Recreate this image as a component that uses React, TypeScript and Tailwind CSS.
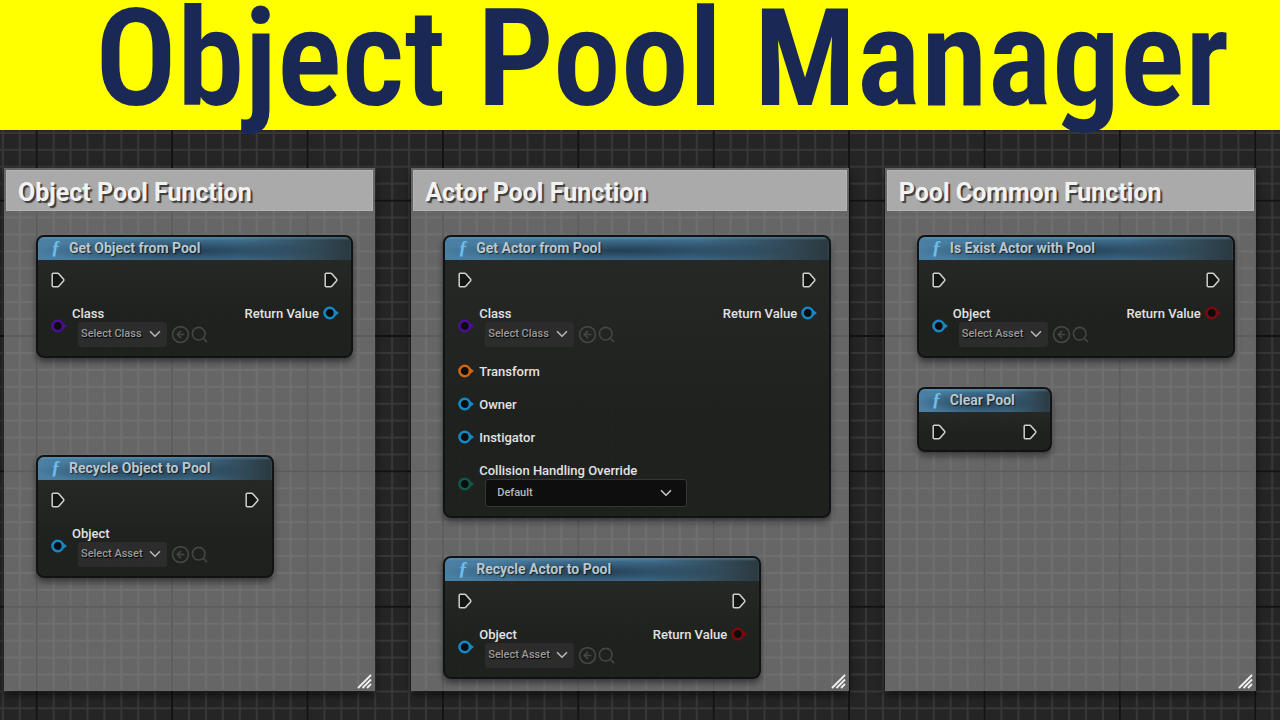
import type { ReactNode } from "react";
import { ChevronDown, CircleArrowLeft, Search } from "lucide-react";

const BLUE = "#1488c4";
const PURPLE = "#4a0f94";
const ORANGE = "#cf6510";
const TEAL = "#0d5a4c";
const RED = "#7c0a0c";

function ExecPin() {
  return (
    <svg width="15" height="16" viewBox="0 0 15 16" className="block">
      <path
        d="M1.2 2.2Q1.2 1.2 2.2 1.2H6.6Q7.4 1.2 8 1.9L12.6 7.3Q13.1 8 12.6 8.7L8 14.1Q7.4 14.8 6.6 14.8H2.2Q1.2 14.8 1.2 13.8Z"
        fill="#141614"
        stroke="#d0d0d0"
        strokeWidth="1.5"
      />
    </svg>
  );
}

function DataPin({ color }: { color: string }) {
  return (
    <svg width="16" height="14" viewBox="0 0 16 14" className="block shrink-0">
      <path d="M10 2.4L15.4 6.5Q16 7 15.4 7.5L10 11.6Z" fill={color} />
      <circle cx="6.7" cy="7" r="5.2" fill="#0b0d0d" stroke={color} strokeWidth="2.6" />
    </svg>
  );
}

function Grid() {
  return (
    <svg className="absolute inset-0 h-full w-full" aria-hidden="true">
      <defs>
        <pattern id="minor" x="36.7" y="70.6" width="16.925" height="16.925" patternUnits="userSpaceOnUse">
          <path d="M0 0V16.925M0 0H16.925M16.925 0V16.925M0 16.925H16.925" stroke="#373737" strokeWidth="2" />
        </pattern>
        <pattern id="major" x="-31" y="2.9" width="135.4" height="135.4" patternUnits="userSpaceOnUse">
          <path d="M67.7 0V135.4M0 67.7H135.4" stroke="#121212" strokeWidth="2" />
        </pattern>
      </defs>
      <rect width="100%" height="100%" fill="#252525" />
      <rect width="100%" height="100%" fill="url(#minor)" />
      <rect width="100%" height="100%" fill="url(#major)" />
    </svg>
  );
}

function AssetPicker({ id, text }: { id: string; text: string }) {
  return (
    <div className="-mt-px mb-px ml-1.5 flex h-[25px] items-start">
      <div className="relative">
        <select
          id={id}
          className="block h-[25px] w-[89px] appearance-none rounded-[3px] bg-[#2b2c2b] pl-[3px] text-[11px] text-[#9a9a9a] [text-shadow:1px_1px_1px_#000]"
        >
          <option>{text}</option>
        </select>
        <ChevronDown size={18} strokeWidth={2.2} className="pointer-events-none absolute top-[3px] right-[3px] text-[#b4b4b4]" />
      </div>
      <button aria-label="Use selected" className="mt-[3px] ml-1 text-[#454645]">
        <CircleArrowLeft size={19} className="block" />
      </button>
      <button aria-label="Browse" className="mt-[3px] text-[#454645]">
        <Search size={19} className="block" />
      </button>
    </div>
  );
}

function Pin({ color, label, id, children }: { color: string; label: string; id?: string; children?: ReactNode }) {
  return (
    <div className="flex items-center gap-[5px]">
      <DataPin color={color} />
      <div>
        {id ? (
          <label htmlFor={id} className="block h-5 leading-[22px]">{label}</label>
        ) : (
          <p className="h-5 leading-[22px]">{label}</p>
        )}
        {children}
      </div>
    </div>
  );
}

function ReturnPin({ color }: { color: string }) {
  return (
    <div className="flex h-5 items-center gap-1">
      <p className="h-5 leading-[22px]">Return Value</p>
      <DataPin color={color} />
    </div>
  );
}

function Node({ title, className, inputs, output }: { title: string; className: string; inputs?: ReactNode; output?: ReactNode }) {
  return (
    <article className={`overflow-hidden rounded-lg border-2 border-[#101214] bg-[#1b1d1b]/95 shadow-[0_4px_6px_rgba(0,0,0,0.45)] ${className}`}>
      <header className="flex h-[23px] items-center bg-[radial-gradient(ellipse_at_45%_60%,rgba(20,40,56,0.7),transparent_60%),linear-gradient(to_right,#4a80a4,#3f6c8a_65%,#2b3940)] pb-0.5 pl-[13px] shadow-[inset_0_2px_2px_rgba(110,160,190,0.4)]">
        <span className="w-[18px] font-['Liberation_Serif',serif] text-[19px] leading-5 font-bold text-[#6cbcec] italic">ƒ</span>
        <h3 className="text-sm leading-5 font-bold text-[#bcc6cc] [text-shadow:1px_1px_1px_rgba(0,0,0,0.6)]">{title}</h3>
      </header>
      <div className="flex justify-between bg-linear-to-b from-[#262826] to-transparent to-60% pt-[10px] pr-3 pb-2 pl-[13px] text-[13px] font-medium text-[#e2e2e2]">
        <div className="flex flex-col gap-[13px]">
          <div className="flex h-5 items-center">
            <ExecPin />
          </div>
          {inputs}
        </div>
        <div className="flex flex-col items-end gap-[13px]">
          <div className="flex h-5 items-center">
            <ExecPin />
          </div>
          {output}
        </div>
      </div>
    </article>
  );
}

function CommentBox({ title, className, children }: { title: string; className: string; children: ReactNode }) {
  return (
    <section className={`relative border-2 border-[#666666]/60 bg-[#a8a8a8]/50 shadow-[0_4px_8px_rgba(0,0,0,0.6)] ${className}`}>
      <h2 className="h-[41px] border border-[#b4b4b4] bg-[#aaaaaa] pl-[11px] text-[25px] leading-[43px] font-bold text-[#f2f2f2] [text-shadow:2px_2px_1px_#3c3c3c]">
        {title}
      </h2>
      <div className="flex flex-col items-start pt-6 pb-[10px] pl-[30px]">{children}</div>
      <svg className="absolute right-0 bottom-0" width="16" height="16" viewBox="0 0 16 16" stroke="#f0f0f0" strokeWidth="1.8">
        <path d="M1 15L14 2M5.5 15L14 6.5M10 15L14 11" />
      </svg>
    </section>
  );
}

export default function App() {
  return (
    <div className="flex min-h-screen flex-col bg-[#252525] font-[Roboto,sans-serif]">
      <header className="relative z-10 h-[130px] bg-[#ffff00]">
        <h1 className="pl-11 text-center font-['Roboto_Condensed',sans-serif] text-[136px] leading-[117px] font-semibold whitespace-nowrap text-[#1a2856]">
          Object Pool Manager
        </h1>
      </header>
      <main className="relative flex-1">
        <Grid />
        <div className="relative flex gap-9 pt-[38px] pr-6 pb-7 pl-1">
          <CommentBox title="Object Pool Function" className="flex-[371]">
            <Node
              title="Get Object from Pool"
              className="w-[317px]"
              inputs={
                <Pin color={PURPLE} label="Class" id="object-class">
                  <AssetPicker id="object-class" text="Select Class" />
                </Pin>
              }
              output={<ReturnPin color={BLUE} />}
            />
            <Node
              title="Recycle Object to Pool"
              className="mt-[97px] w-[238px]"
              inputs={
                <Pin color={BLUE} label="Object" id="recycle-object">
                  <AssetPicker id="recycle-object" text="Select Asset" />
                </Pin>
              }
            />
          </CommentBox>

          <CommentBox title="Actor Pool Function" className="flex-[438]">
            <Node
              title="Get Actor from Pool"
              className="w-[388px]"
              inputs={
                <>
                  <Pin color={PURPLE} label="Class" id="actor-class">
                    <AssetPicker id="actor-class" text="Select Class" />
                  </Pin>
                  <Pin color={ORANGE} label="Transform" />
                  <Pin color={BLUE} label="Owner" />
                  <Pin color={BLUE} label="Instigator" />
                  <Pin color={TEAL} label="Collision Handling Override" id="collision">
                    <div className="relative -mt-px mb-px ml-1.5 w-[202px]">
                      <select
                        id="collision"
                        className="block h-7 w-full appearance-none rounded-[3px] border border-[#363636] bg-[#0e0e0e] pl-[11px] text-[11px] text-[#b8b8b8]"
                      >
                        <option>Default</option>
                      </select>
                      <ChevronDown size={18} strokeWidth={2.2} className="pointer-events-none absolute top-[5px] right-3 text-[#c4c4c4]" />
                    </div>
                  </Pin>
                </>
              }
              output={<ReturnPin color={BLUE} />}
            />
            <Node
              title="Recycle Actor to Pool"
              className="mt-[38px] w-[318px]"
              inputs={
                <Pin color={BLUE} label="Object" id="recycle-actor">
                  <AssetPicker id="recycle-actor" text="Select Asset" />
                </Pin>
              }
              output={<ReturnPin color={RED} />}
            />
          </CommentBox>

          <CommentBox title="Pool Common Function" className="flex-[371]">
            <Node
              title="Is Exist Actor with Pool"
              className="w-[318px]"
              inputs={
                <Pin color={BLUE} label="Object" id="exist-object">
                  <AssetPicker id="exist-object" text="Select Asset" />
                </Pin>
              }
              output={<ReturnPin color={RED} />}
            />
            <Node title="Clear Pool" className="mt-[29px] w-[135px]" />
          </CommentBox>
        </div>
      </main>
    </div>
  );
}
